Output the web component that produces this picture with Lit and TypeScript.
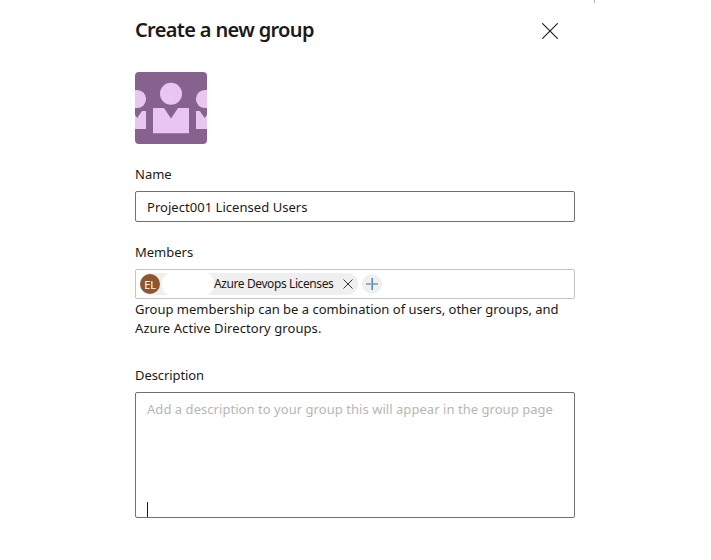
import { LitElement, html, css, svg } from "lit";
import { customElement } from "lit/decorators.js";

@customElement("group-avatar")
class GroupAvatar extends LitElement {
  static styles = css`
    :host { display: block; width: 72px; height: 72px; border-radius: 4px; overflow: hidden; background: #87628f; }
    svg { display: block; fill: #e8c6f2; }
  `;
  render() {
    return html`<svg width="72" height="72" viewBox="0 0 72 72">
      ${svg`
        <circle cx="36" cy="21.7" r="11" />
        <path d="M18 36h11l7 10.5 7-10.5h11v25.3H18z" />
        <circle cx="2" cy="27" r="9.1" />
        <path d="M-7 39h4l5.2 7 4.8-7h4v18H-7z" />
        <circle cx="70" cy="27" r="9.1" />
        <path d="M61 39h3.7l5 7 4.8-7h4v18H61z" />
      `}
    </svg>`;
  }
}

@customElement("member-chip")
class MemberChip extends LitElement {
  static styles = css`
    :host { display: flex; align-items: center; width: 218px; height: 22px; border-radius: 11px; background: #efefef; box-sizing: border-box; }
    .initials { flex: none; width: 20px; height: 20px; border-radius: 50%; background: #8e562e; color: #fff; font-size: 11px; line-height: 22px; text-align: center; letter-spacing: -0.3px; }
    .blank { flex: none; width: 52px; height: 22px; margin-left: 2px; background: #fff; border-radius: 7px / 11px; }
    .name { flex: none; width: 119px; font-size: 12px; line-height: 24px; white-space: nowrap; letter-spacing: -0.4px; }
    svg { display: block; margin-left: 10px; }
  `;
  render() {
    return html`
      <span class="initials">EL</span>
      <span class="blank"></span>
      <span class="name">Azure Devops Licenses</span>
      <svg width="10" height="10" viewBox="0 0 10 10" fill="none" stroke="#333"><path d="M.5.5l9 9M9.5.5l-9 9" /></svg>
    `;
  }
}

@customElement("app-root")
class AppRoot extends LitElement {
  static styles = css`
    :host { display: block; position: relative; width: 711px; height: 560px; overflow: hidden; background: #fff; color: #1b1a19; font: 13px/19px "Noto Sans", sans-serif; }
    .panel { display: flex; flex-direction: column; width: 440px; margin-left: 135px; padding-top: 16px; }
    header { display: flex; justify-content: space-between; height: 28px; }
    h1 { margin: 0; font-size: 20px; line-height: 28px; font-weight: 600; letter-spacing: -0.66px; white-space: nowrap; }
    .close { margin: 7px 17px 0 0; }
    group-avatar { margin-top: 28px; }
    .label { height: 20px; line-height: 20px; white-space: nowrap; }
    .box { box-sizing: border-box; border: 1px solid #727170; border-radius: 2px; white-space: nowrap; }
    .name-label { margin-top: 20px; }
    .name-box { height: 31px; margin-top: 7px; padding-left: 11px; line-height: 30px; letter-spacing: 0.04px; }
    .members-label { margin-top: 20px; }
    .members-box { display: flex; align-items: center; height: 30px; margin-top: 7px; padding-left: 4px; border-color: #c5c4c3; }
    .add { display: flex; align-items: center; justify-content: center; width: 20px; height: 20px; margin-left: 4px; border-radius: 50%; background: #efefef; }
    .hint { margin-top: 1px; white-space: nowrap; }
    .hint-end { letter-spacing: 0.07px; }
    .desc-label { margin-top: 27px; letter-spacing: -0.08px; }
    .desc-box { display: flex; flex-direction: column; justify-content: space-between; height: 126px; margin-top: 7px; padding: 7px 11px 0; color: #b7b6b5; letter-spacing: 0.045px; }
    .caret { width: 1px; height: 15px; background: #1b1a19; }
    .edge { position: absolute; left: 594px; top: 0; width: 1px; height: 3px; background: #b5b5b5; }
  `;
  render() {
    return html`
      <div class="panel">
        <header>
          <h1>Create a new group</h1>
          <svg class="close" width="16" height="16" viewBox="0 0 16 16" fill="none" stroke="#1b1a19" stroke-width="1.1"><path d="M.3.3l15.4 15.4M15.7.3L.3 15.7" /></svg>
        </header>
        <group-avatar></group-avatar>
        <div class="label name-label">Name</div>
        <div class="box name-box">Project001 Licensed Users</div>
        <div class="label members-label">Members</div>
        <div class="box members-box">
          <member-chip></member-chip>
          <span class="add"><svg width="12" height="12" viewBox="0 0 12 12" fill="none"><path d="M0 6h12" stroke="#888" stroke-width="1.4" /><path d="M5.5 0v12" stroke="#e0a468" /><path d="M6.5 0v12" stroke="#4b91d1" /></svg></span>
        </div>
        <div class="hint">Group membership can be a combination of users, other groups, and<br /><span class="hint-end">Azure Active Directory groups.</span></div>
        <div class="label desc-label">Description</div>
        <div class="box desc-box">
          <span>Add a description to your group this will appear in the group page</span>
          <span class="caret"></span>
        </div>
      </div>
      <i class="edge"></i>
    `;
  }
}
